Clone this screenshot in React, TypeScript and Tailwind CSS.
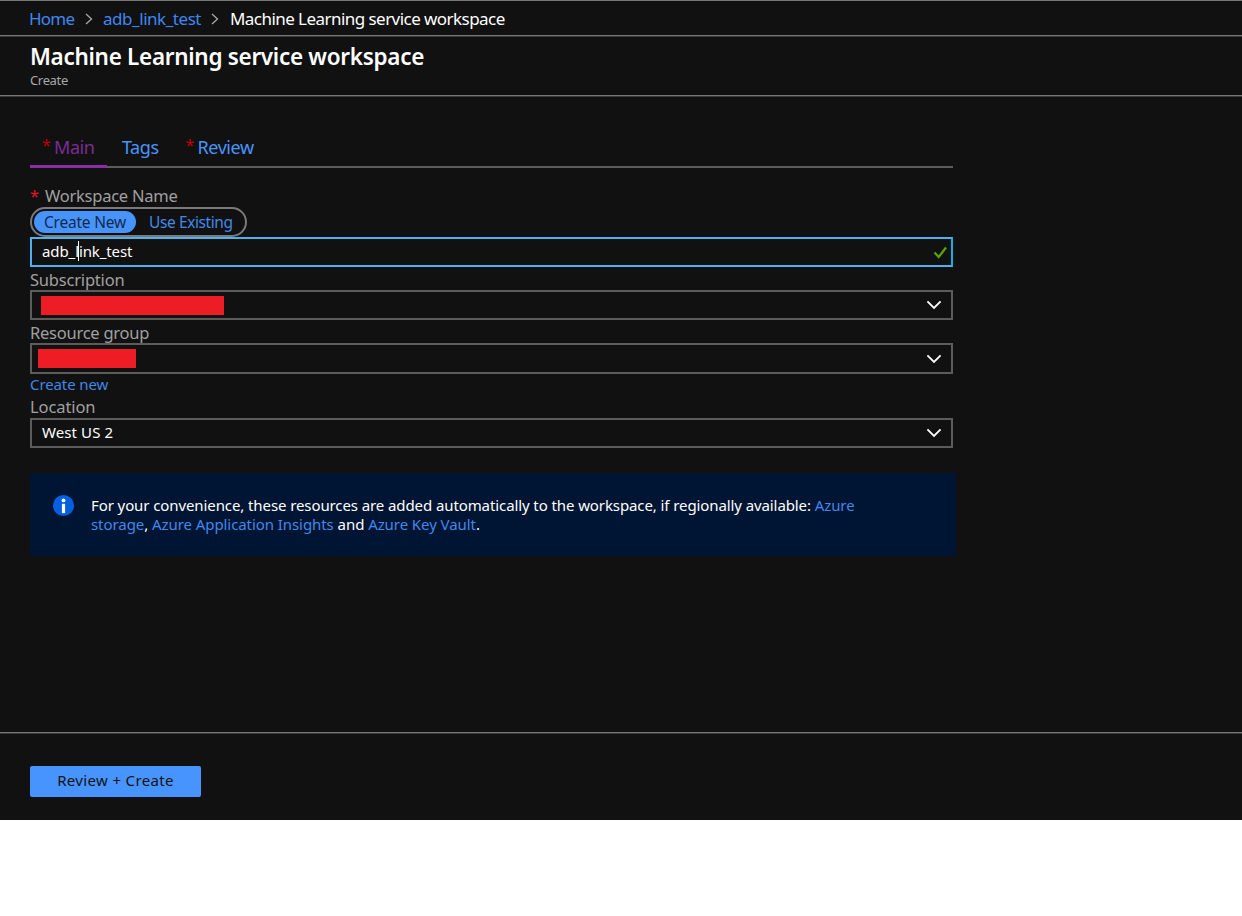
import type { ReactNode } from "react";

function Chevron() {
  return (
    <svg width="16" height="10" viewBox="0 0 16 10" fill="none" stroke="#fff" strokeWidth="1.8">
      <path d="M1.400 1.400 8 8l6.600-6.600" />
    </svg>
  );
}

function Crumb() {
  return (
    <svg width="8" height="12" viewBox="0 0 8 12" fill="none" stroke="#a8a8a8" strokeWidth="1.3">
      <path d="M1 1l5.500 5L1 11" />
    </svg>
  );
}

function Label({ children, className }: { children: ReactNode; className: string }) {
  return <div className={`flex items-center whitespace-nowrap text-[16.500px] text-[#a0a0a0] ${className}`}>{children}</div>;
}

function Select({ children, className }: { children: ReactNode; className: string }) {
  return (
    <div className={`flex items-center justify-between border-2 border-[#5c5c5c] pr-[9px] ${className}`}>
      {children}
      <Chevron />
    </div>
  );
}

export default function App() {
  return (
    <div className="h-[916px] w-[1242px] overflow-hidden bg-white font-['Noto_Sans',sans-serif]">
      <div className="flex h-[820px] flex-col bg-[#111111] text-white">
        <nav className="flex h-[36px] shrink-0 items-center whitespace-nowrap border-t border-b border-[#777777] pt-[2px] pl-[29px] text-[17px] shadow-[0_1px_0_#3a3a3a]">
          <a className="w-[45px] tracking-[-0.800px] text-[#3f86f2]">Home</a>
          <span className="ml-[11px] flex w-[18px]"><Crumb /></span>
          <a className="w-[98px] tracking-[-0.450px] text-[#3f86f2]">adb_link_test</a>
          <span className="ml-[10px] flex w-[19px]"><Crumb /></span>
          <span className="tracking-[-0.550px]">Machine Learning service workspace</span>
        </nav>
        <header className="flex h-[60px] shrink-0 flex-col border-b border-[#777777] pl-[30px] shadow-[0_1px_0_#3a3a3a,inset_0_1px_0_#3a3a3a]">
          <h1 className="mt-[7px] h-[28px] whitespace-nowrap text-[22.500px] leading-[28px] font-semibold tracking-[-0.300px]">Machine Learning service workspace</h1>
          <p className="mt-[1px] h-[16px] text-[13px] leading-[16px] tracking-[-0.350px] text-[#a8a8a8]">Create</p>
        </header>
        <main className="flex flex-1 flex-col pl-[30px]">
          <div className="mt-[33px] flex h-[39px] w-[923px] border-b-2 border-[#5c5c5c] text-[18px] leading-[36px] tracking-[-0.450px] whitespace-nowrap text-[#4894fe]">
            <div className="flex h-[39px] w-[77px] border-b-[3px] border-[#8a2da5] pl-[12px] text-[#7b2c94]">
              <span className="w-[12px] text-[16px] leading-[33px] text-[#c00000]">*</span>Main
            </div>
            <div className="ml-[15px]">Tags</div>
            <div className="ml-[27px] flex"><span className="w-[12px] text-[16px] leading-[33px] text-[#c00000]">*</span>Review</div>
          </div>
          <Label className="mt-[18px] h-[21px] tracking-[-0.250px]"><span className="w-[15px] text-[#e81123]">*</span>Workspace Name</Label>
          <div className="flex h-[30px] w-[217px] items-center rounded-full border-2 border-[#7a7a7a] pl-[2px] text-[15.500px] whitespace-nowrap">
            <button className="flex h-[22px] w-[102px] items-center justify-center rounded-full bg-[#4894fe] pt-[2px] tracking-[-0.200px] text-[#112a4c]">Create New</button>
            <button className="ml-[13px] pt-[2px] tracking-[-0.400px] text-[#4388e8]">Use Existing</button>
          </div>
          <div className="flex h-[30px] w-[923px] items-center justify-between border-2 border-r-[#12b0e0] border-[#4fb0ee] pr-[4px] pl-[10px] text-[15px]">
            <span className="relative pb-[2px] tracking-[-0.100px]"><span>adb_link_test</span><i className="absolute top-[1px] left-[36px] h-[20px] w-px bg-white" /></span>
            <svg width="14" height="13" viewBox="0 0 14 13" fill="none" stroke="#57a300" strokeWidth="2.300"><path d="M1.500 6.500 5.700 11 13 1.500" /></svg>
          </div>
          <Label className="h-[23px] pt-[3px] tracking-[-0.200px]">Subscription</Label>
          <Select className="h-[30px] w-[923px]"><i className="ml-[9px] h-[19px] w-[183px] bg-[#ee1c24]" /></Select>
          <Label className="h-[23px] pt-[4px] tracking-[-0.250px]">Resource group</Label>
          <Select className="h-[31px] w-[923px]"><i className="ml-[6px] h-[19px] w-[98px] bg-[#ee1c24]" /></Select>
          <a className="flex h-[22px] items-center pb-[2px] text-[15px] tracking-[-0.100px] text-[#3f86e8]">Create new</a>
          <Label className="h-[22px] tracking-[-0.100px]">Location</Label>
          <Select className="h-[30px] w-[923px]"><span className="ml-[10px] pb-[2px] text-[15px] tracking-[0.100px]">West US 2</span></Select>
          <aside className="mt-[25px] flex h-[83px] w-[926px] rounded-[2px] bg-[#001433] pl-[23px]">
            <svg className="mt-[22px] mr-[17px] h-[21px] w-[21px] shrink-0" viewBox="0 0 21 21"><circle cx="10.500" cy="10.500" r="10.500" fill="#0460e0" /><circle cx="10.500" cy="5.400" r="1.900" fill="#fff" /><path d="M8.900 8.800h3.200v9.300H8.900z" fill="#fff" /></svg>
            <p className="mt-[23px] text-[15px] leading-[19px] tracking-[-0.095px] whitespace-nowrap">
              <span>For your convenience, these resources are added automatically to the workspace, if regionally available: <a className="text-[#4388e8]">Azure</a></span><br />
              <span className="tracking-[-0.070px]"><a className="text-[#4388e8]">storage</a>, <a className="text-[#4388e8]">Azure Application Insights</a> and <a className="text-[#4388e8]">Azure Key Vault</a>.</span>
            </p>
          </aside>
        </main>
        <footer className="h-[88px] shrink-0 border-t border-[#777777] pt-[33px] pl-[30px] shadow-[inset_0_1px_0_#3a3a3a]">
          <button className="flex h-[31px] w-[171px] items-center justify-center rounded-[2px] bg-[#4894fe] pb-[2px] text-[15px] tracking-[0.350px] text-[#111]">Review + Create</button>
        </footer>
      </div>
    </div>
  );
}
